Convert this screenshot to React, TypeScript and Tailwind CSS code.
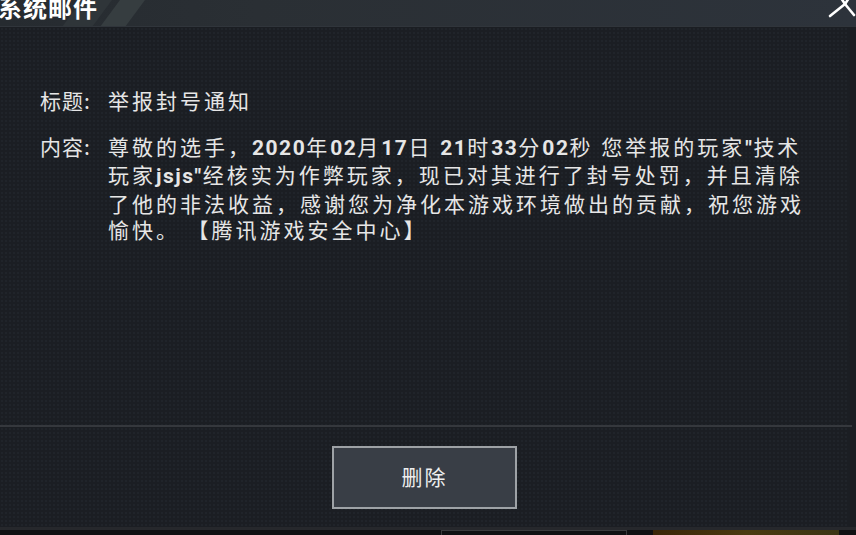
import React from "react";

const font = { fontFamily: '"Noto Sans CJK SC", "Noto Sans", sans-serif' };
const num = { fontFamily: 'Roboto, "Noto Sans CJK SC", sans-serif' };

function B({ children }: { children: React.ReactNode }) {
  return (
    <span className="font-bold tracking-[1.5px]" style={num}>
      {children}
    </span>
  );
}

export default function App() {
  return (
    <div className="w-[856px] h-[535px] overflow-hidden bg-[#1b1e23] flex flex-col text-[#e6e6e6]" style={font}>
      {/* header */}
      <div className="relative h-[27px] shrink-0 overflow-hidden bg-[#2a2f35] border-b border-[#30353b]">
        <svg className="absolute inset-0" width="856" height="27" viewBox="0 0 856 27">
          <defs>
            <linearGradient id="hg" x1="0" x2="1" y1="0" y2="0">
              <stop offset="0" stopColor="#262b30" />
              <stop offset="0.3" stopColor="#2a2f34" />
              <stop offset="1" stopColor="#2d333b" />
            </linearGradient>
          </defs>
          <rect width="856" height="27" fill="url(#hg)" />
          <polygon points="62,27 82,0 112,0 92,27" fill="#2f3539" />
          <polygon points="100,27 120,0 145,0 125,27" fill="#363d40" />
        </svg>
        <div className="relative -mt-[5px] -ml-[2px] text-[24px] leading-none font-bold text-white tracking-[1px] whitespace-nowrap">
          系统邮件
        </div>
        <svg className="absolute top-0 right-0" width="34" height="24" viewBox="0 0 34 24">
          <g stroke="#ffffff" strokeWidth="2.6" strokeLinecap="round">
            <line x1="23" y1="4" x2="8" y2="16" />
            <line x1="23" y1="4" x2="32" y2="15" />
            <line x1="23" y1="4" x2="27" y2="-2" />
            <line x1="23" y1="4" x2="19" y2="-2" />
          </g>
        </svg>
      </div>

      {/* body */}
      <div className="w-[849px] flex flex-col bg-[radial-gradient(circle,#20242a_1px,transparent_1px)] bg-[length:4px_4px]">
        <div className="h-[398px] pt-[61px] text-[21px] tracking-[3px]">
          <div className="flex h-[26px] items-center whitespace-nowrap">
            <div className="w-[108px] pl-[40px] tracking-[1px]">标题:</div>
            <div>举报封号通知</div>
          </div>
          <div className="flex mt-[19px] whitespace-nowrap leading-[26.4px]">
            <div className="w-[108px] pl-[40px] tracking-[1px] shrink-0">内容:</div>
            <div className="flex flex-col">
              <div>
                尊敬的选手，<B>2020</B>年<B>02</B>月<B>17</B>日 <B>21</B>时<B>33</B>分<B>02</B>秒 您举报的玩家<B>"</B>技术
              </div>
              <div>
                玩家<B>jsjs"</B>经核实为作弊玩家，现已对其进行了封号处罚，并且清除
              </div>
              <div>了他的非法收益，感谢您为净化本游戏环境做出的贡献，祝您游戏</div>
              <div>
                愉快。<span className="ml-[18px]">【腾讯游戏安全中心】</span>
              </div>
            </div>
          </div>
        </div>
        <div className="h-[2px] bg-[#35383d] mr-[-3px]" />
        <div className="h-[100px] flex items-center justify-center">
          <div className="w-[185px] h-[63px] border-2 border-[#9ea2a6] bg-[#393e46] flex items-center justify-center text-[21px] tracking-[2px] text-[#eeeeee]">
            删除
          </div>
        </div>
      </div>

      {/* bottom strip */}
      <div className="h-[3px] bg-[#26282c] shrink-0" />
      <div className="flex-1 bg-[#101113] flex">
        <div className="ml-[441px] w-[186px] border-t border-l border-r border-[#3a3b3d]" />
        <div className="ml-[26px] w-[186px] bg-[linear-gradient(90deg,#3a2608,#4a3a10,#3b3414)]" />
      </div>
    </div>
  );
}
